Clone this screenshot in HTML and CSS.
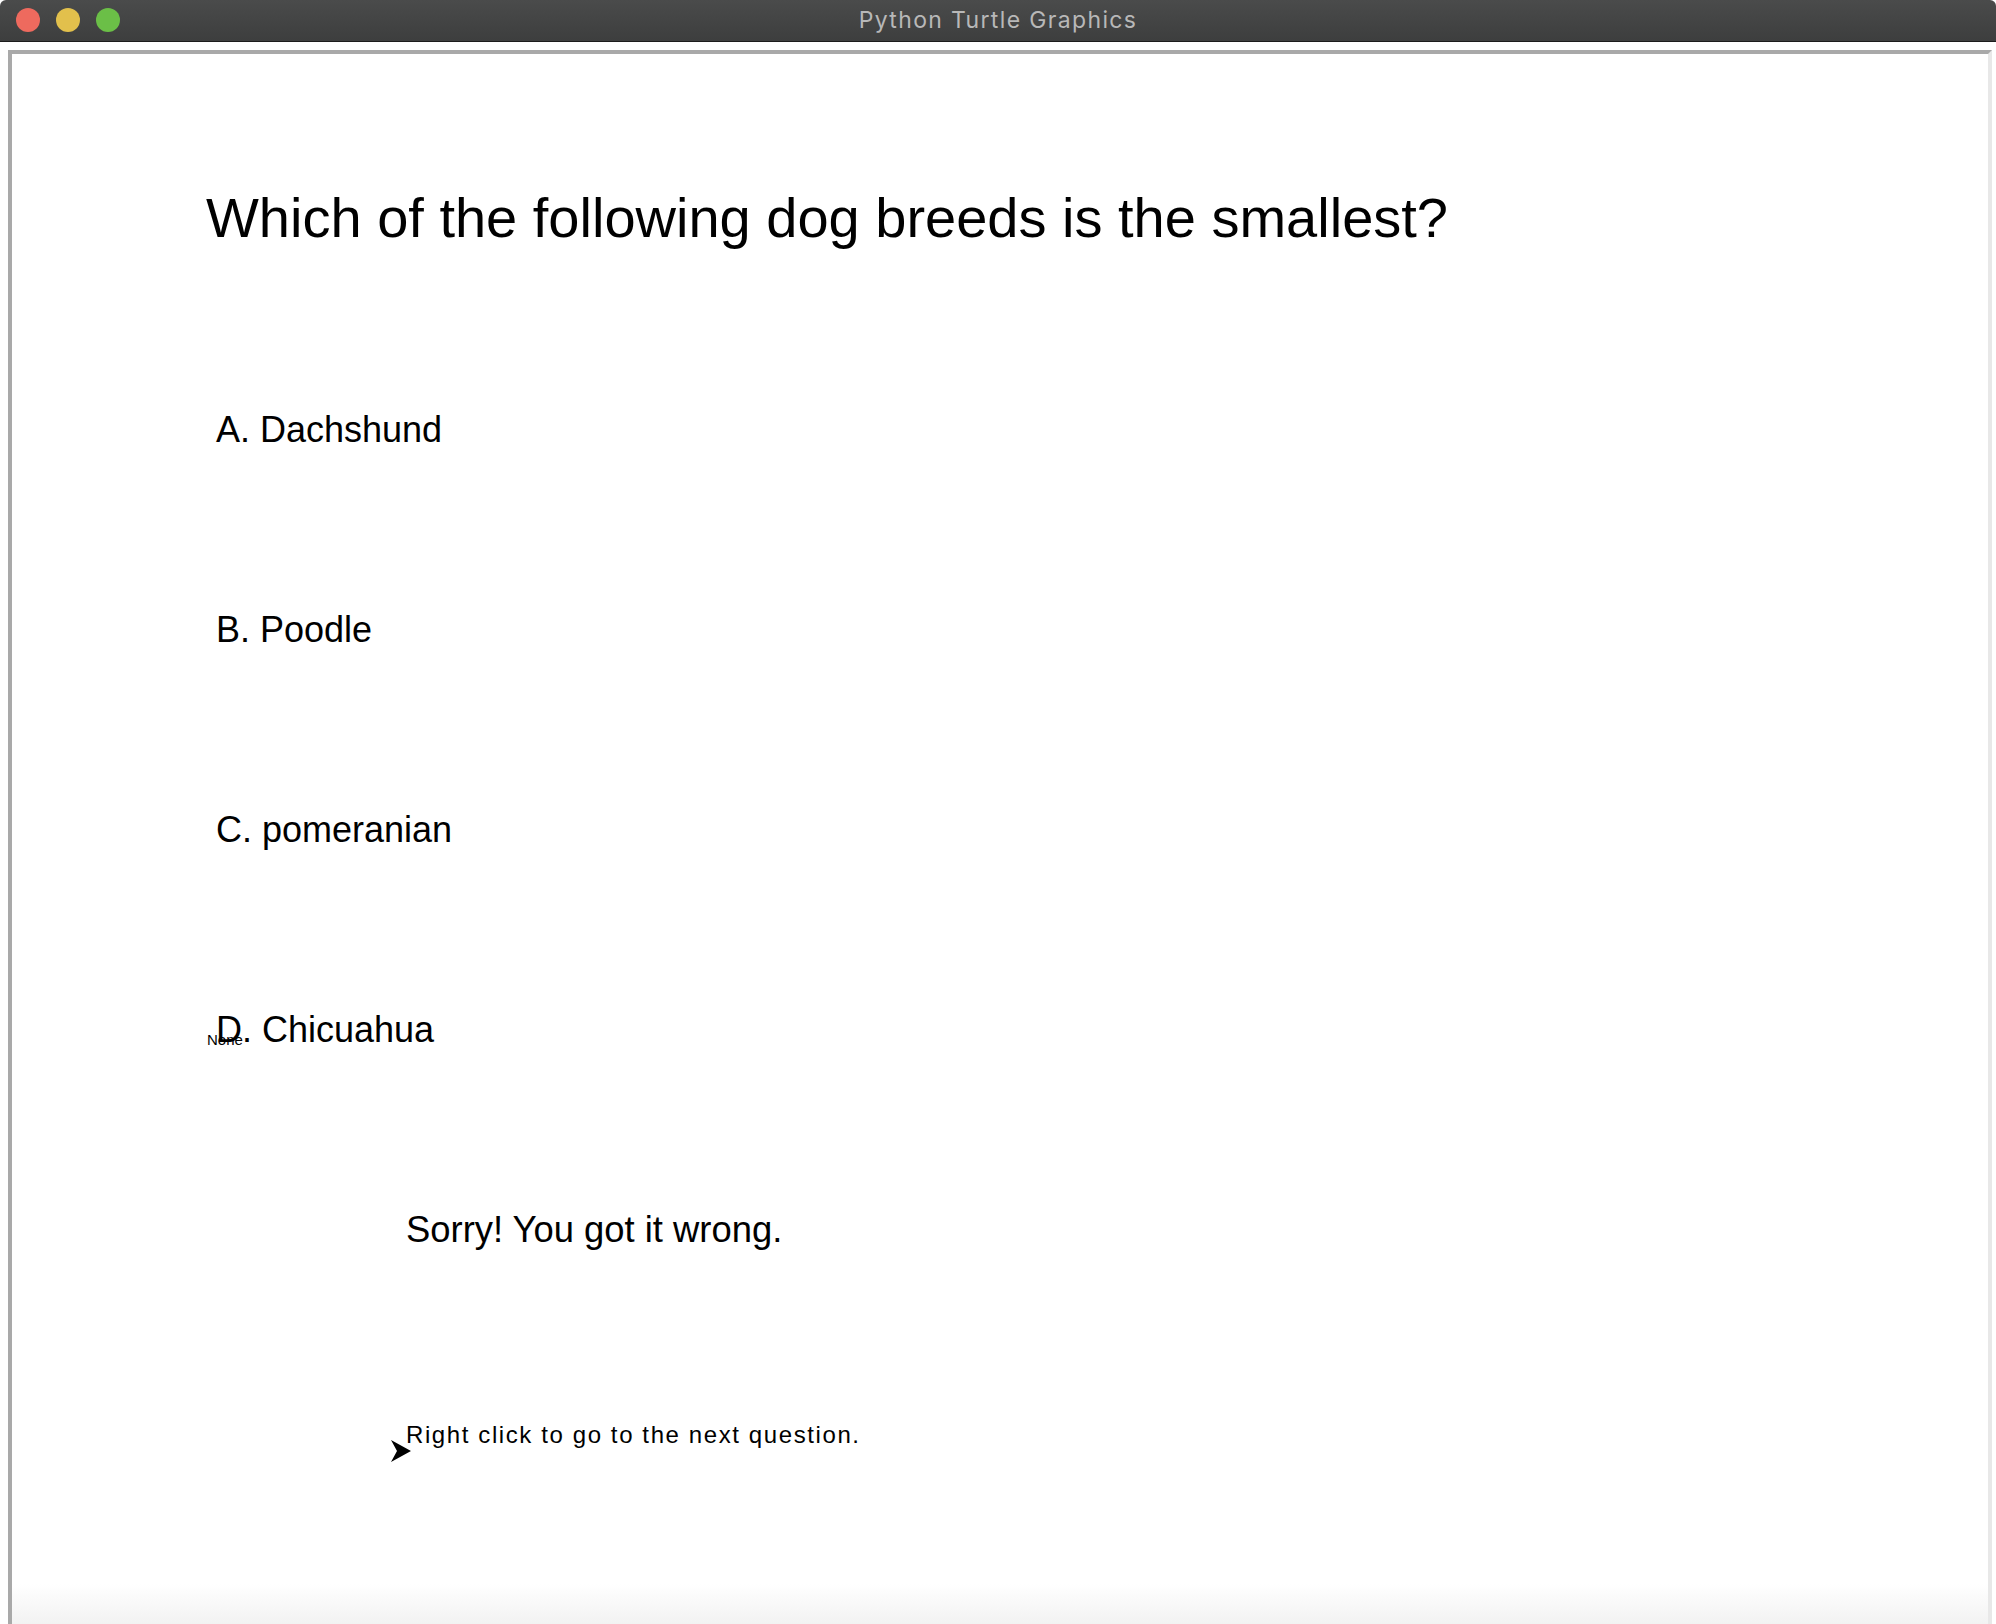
FILE: index.html
```html
<!DOCTYPE html>
<html lang="en">
<head>
<meta charset="utf-8">
<title>Python Turtle Graphics</title>
<link rel="stylesheet" href="styles.css">
</head>
<body>
<div class="window">
  <header class="titlebar">
    <div class="lights">
      <span class="light red"></span>
      <span class="light yellow"></span>
      <span class="light green"></span>
    </div>
    <div class="title">Python Turtle Graphics</div>
  </header>
  <main class="canvas">
    <h1 class="question">Which of the following dog breeds is the smallest?</h1>
    <ul class="options">
      <li class="option">A. Dachshund</li>
      <li class="option">B. Poodle</li>
      <li class="option">C. pomeranian</li>
      <li class="option option-d">D. Chicuahua<span class="none-label">None</span></li>
    </ul>
    <p class="feedback">Sorry! You got it wrong.</p>
    <p class="hint">Right click to go to the next question.<svg class="turtle" viewBox="0 0 20 22" width="20" height="22"><polygon points="0,0 20,11 0,22 6,11" fill="#000"/></svg></p>
  </main>
</div>
</body>
</html>
```
FILE: styles.css
```css
* { box-sizing: border-box; }
html, body {
  margin: 0;
  padding: 0;
  background: #ffffff;
}
body {
  width: 1996px;
  height: 1624px;
  overflow: hidden;
  font-family: "Liberation Sans", Arial, sans-serif;
  color: #000;
}
.window {
  width: 1996px;
  height: 1624px;
  display: flex;
  flex-direction: column;
}
.titlebar {
  position: relative;
  height: 42px;
  flex: none;
  background: linear-gradient(to bottom, #4a4b4b, #3d3e3e);
  border-bottom: 1px solid #1c1c1c;
  border-radius: 6px 6px 0 0;
  display: flex;
  align-items: center;
  justify-content: center;
}
.lights {
  position: absolute;
  left: 16px;
  top: 8px;
  display: flex;
  gap: 16px;
}
.light {
  width: 24px;
  height: 24px;
  border-radius: 50%;
  display: block;
}
.red { background: #ee6a5e; }
.yellow { background: #e2c04c; }
.green { background: #6bbf47; }
.title {
  font-family: "Inter", "Liberation Sans", sans-serif;
  font-size: 23px;
  color: #b8b8b8;
  letter-spacing: 1.35px;
  margin-top: -2px;
}
.canvas {
  flex: 1;
  margin: 8px 4px 0 8px;
  border-top: 4px solid #a9a9a9;
  border-left: 4px solid #a9a9a9;
  border-right: 4px solid #e8e8e8;
  background: linear-gradient(to bottom, #ffffff 0, #ffffff 1530px, #f2f2f2 100%);
  padding: 131px 0 0 194px;
}
.question {
  margin: 0;
  font-weight: normal;
  font-size: 56px;
  line-height: 66px;
}
.options {
  list-style: none;
  margin: 159px 0 0 10px;
  padding: 0;
  display: flex;
  flex-direction: column;
  gap: 160px;
}
.option {
  font-size: 36px;
  line-height: 40px;
}
.option-d { position: relative; }
.none-label {
  position: absolute;
  left: -9px;
  top: 21px;
  font-size: 15px;
  line-height: 17px;
}
.feedback {
  margin: 160px 0 0 200px;
  font-size: 36.4px;
  line-height: 40px;
}
.hint {
  position: relative;
  margin: 171px 0 0 200px;
  font-size: 24px;
  line-height: 28px;
  letter-spacing: 1.6px;
}
.turtle {
  position: absolute;
  left: -15px;
  top: 19px;
}
```
